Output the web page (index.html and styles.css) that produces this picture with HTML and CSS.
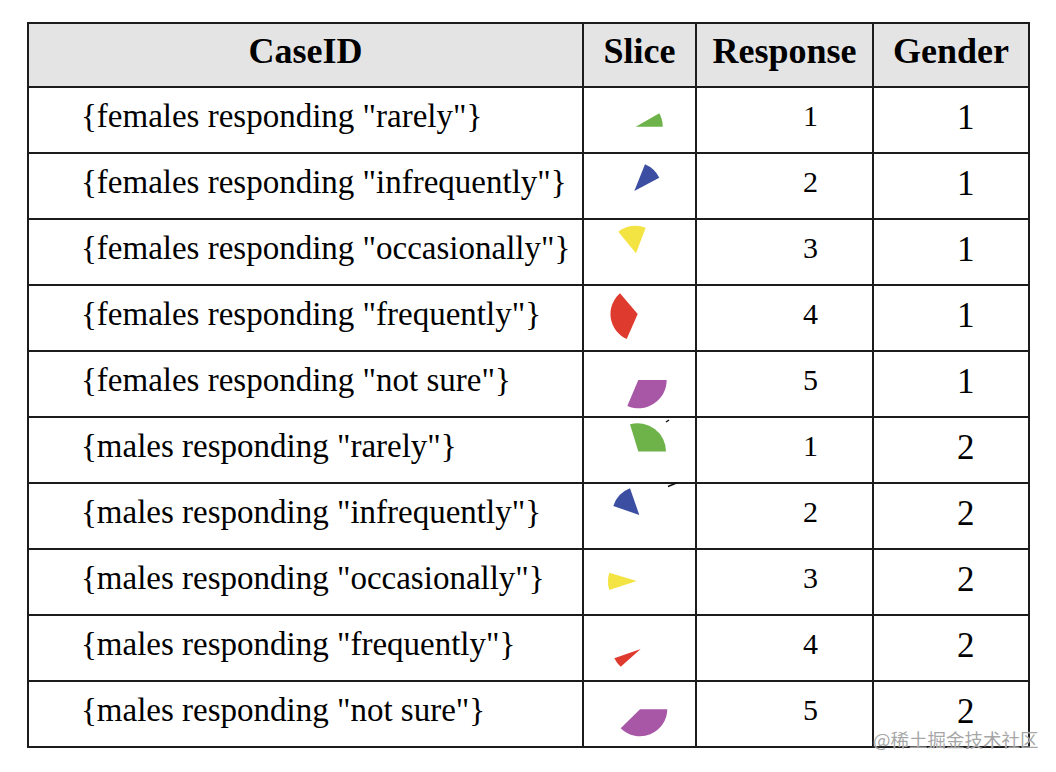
FILE: index.html
```html
<!DOCTYPE html>
<html lang="en">
<head>
<meta charset="utf-8">
<title>CaseID table</title>
<link rel="stylesheet" href="styles.css">
</head>
<body>
<div class="table">
  <div class="cell head">CaseID</div>
  <div class="cell head">Slice</div>
  <div class="cell head">Response</div>
  <div class="cell head">Gender</div>

  <div class="cell case">{females responding "rarely"}</div>
  <div class="cell slice"><svg width="111" height="64" viewBox="0 0 111 64"><path class="green" d="M51.7 38.7 L78.7 38.7 A27 27 0 0 0 75.3 25.3 Z"/></svg></div>
  <div class="cell resp">1</div>
  <div class="cell gender">1</div>

  <div class="cell case">{females responding "infrequently"}</div>
  <div class="cell slice"><svg width="111" height="64" viewBox="0 0 111 64"><path class="blue" d="M50.3 37 L61 10.3 A28.5 28.5 0 0 1 75.3 23.7 Z"/></svg></div>
  <div class="cell resp">2</div>
  <div class="cell gender">1</div>

  <div class="cell case">{females responding "occasionally"}</div>
  <div class="cell slice"><svg width="111" height="64" viewBox="0 0 111 64"><path class="yellow" d="M52 33.3 L34.3 11.7 A27.7 27.7 0 0 1 61.7 7.7 Z"/></svg></div>
  <div class="cell resp">3</div>
  <div class="cell gender">1</div>

  <div class="cell case">{females responding "frequently"}</div>
  <div class="cell slice"><svg width="111" height="64" viewBox="0 0 111 64"><path class="red" d="M53.7 28 L42.7 53 A27.3 27.3 0 0 1 36 7.3 Z"/></svg></div>
  <div class="cell resp">4</div>
  <div class="cell gender">1</div>

  <div class="cell case">{females responding "not sure"}</div>
  <div class="cell slice"><svg width="111" height="64" viewBox="0 0 111 64"><path class="purple" d="M54.3 28 L82.7 28 A28.3 28.3 0 0 1 43.3 54 Z"/></svg></div>
  <div class="cell resp">5</div>
  <div class="cell gender">1</div>

  <div class="cell case">{males responding "rarely"}</div>
  <div class="cell slice"><svg width="111" height="64" viewBox="0 0 111 64"><path class="green" d="M54.3 33.5 L46 6.3 A28.2 28.2 0 0 1 82 33.5 Z"/><path class="mark" d="M82 4 L85 2"/></svg></div>
  <div class="cell resp">1</div>
  <div class="cell gender">2</div>

  <div class="cell case">{males responding "infrequently"}</div>
  <div class="cell slice"><svg width="111" height="64" viewBox="0 0 111 64"><path class="blue" d="M55.3 31 L29.3 22 A28 28 0 0 1 46 4.3 Z"/><path class="mark" d="M84 2.5 L93 -1.3"/></svg></div>
  <div class="cell resp">2</div>
  <div class="cell gender">2</div>

  <div class="cell case">{males responding "occasionally"}</div>
  <div class="cell slice"><svg width="111" height="64" viewBox="0 0 111 64"><path class="yellow" d="M52.7 31 L25.3 40 A28.7 28.7 0 0 1 25.3 22.7 Z"/></svg></div>
  <div class="cell resp">3</div>
  <div class="cell gender">2</div>

  <div class="cell case">{males responding "frequently"}</div>
  <div class="cell slice"><svg width="111" height="64" viewBox="0 0 111 64"><path class="red" d="M56.7 33 L36.7 50.7 A27.4 27.4 0 0 1 30.3 42.3 Z"/></svg></div>
  <div class="cell resp">4</div>
  <div class="cell gender">2</div>

  <div class="cell case">{males responding "not sure"}</div>
  <div class="cell slice"><svg width="111" height="64" viewBox="0 0 111 64"><path class="purple" d="M56 27.3 L83.3 27.3 A27.3 27.3 0 0 1 36.7 46.3 Z"/></svg></div>
  <div class="cell resp">5</div>
  <div class="cell gender">2</div>
</div>
<div class="watermark">@稀土掘金技术社区</div>
</body>
</html>
```

FILE: styles.css
```css
html, body {
  margin: 0;
  padding: 0;
  background: #ffffff;
}

body {
  position: relative;
  width: 1056px;
  height: 772px;
  overflow: hidden;
  font-family: "Liberation Serif", "Times New Roman", serif;
  color: #000000;
}

.table {
  display: grid;
  grid-template-columns: 555px 113px 177px 156px;
  width: max-content;
  margin: 22px 0 0 27px;
  border-left: 2px solid #1c1c1c;
  border-top: 2px solid #1c1c1c;
}

.cell {
  box-sizing: border-box;
  height: 66px;
  border-right: 2px solid #1c1c1c;
  border-bottom: 2px solid #1c1c1c;
  white-space: nowrap;
}

.head {
  height: 64px;
  background: #e5e4e5;
  font-weight: 700;
  font-size: 36px;
  text-align: center;
  padding-top: 6px;
}

.case {
  font-size: 33px;
  padding: 10px 0 0 52px;
}

.slice {
  padding: 0;
}

.slice svg {
  display: block;
  overflow: visible;
}

.resp {
  font-size: 30px;
  padding: 11px 0 0 106px;
}

.gender {
  font-size: 35px;
  line-height: 30px;
  padding: 15px 0 0 83px;
}

.green { fill: #6db34a; }
.blue { fill: #3b4ea2; }
.yellow { fill: #f4e443; }
.red { fill: #df3a2e; }
.purple { fill: #a857a6; }

.mark {
  fill: none;
  stroke: #111111;
  stroke-width: 1.5;
}

.watermark {
  position: absolute;
  left: 873px;
  top: 730px;
  font-family: "Noto Sans CJK SC", "Noto Sans", sans-serif;
  font-size: 18.5px;
  line-height: 19px;
  color: rgba(150, 150, 150, 0.85);
  text-shadow: 0 0 1px rgba(255, 255, 255, 0.9);
  white-space: nowrap;
}
```
